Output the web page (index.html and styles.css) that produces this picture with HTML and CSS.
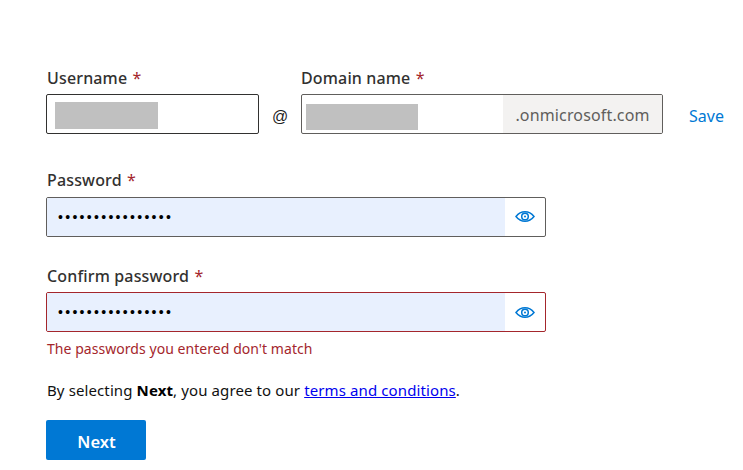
FILE: index.html
```html
<!DOCTYPE html>
<html lang="en">
<head>
<meta charset="utf-8">
<title>Create account</title>
<link rel="stylesheet" href="styles.css">
</head>
<body>
<form class="form">
  <div class="row-top">
    <div class="field user-field">
      <div class="label indent">Username <span class="req">*</span></div>
      <div class="box user-box"><div class="redact user-redact"></div></div>
    </div>
    <div class="at">@</div>
    <div class="field domain-field">
      <div class="label">Domain name <span class="req">*</span></div>
      <div class="box domain-box">
        <div class="domain-main"><div class="redact domain-redact"></div></div>
        <div class="suffix">.onmicrosoft.com</div>
      </div>
    </div>
    <a class="save">Save</a>
  </div>
  <div class="field pw-field">
    <div class="label indent">Password <span class="req">*</span></div>
    <div class="box pw-box">
      <div class="pw-value">••••••••••••••••</div>
      <div class="eye">
        <svg width="20" height="11" viewBox="0 0 20 11" fill="none" stroke="#0078d4" stroke-width="1.5"><path d="M1 5.500C3.500 2.300 6.500 .8 10 .8s6.500 1.500 9 4.700c-2.500 3.200-5.500 4.700-9 4.700S3.500 8.700 1 5.500Z"/><circle cx="10" cy="5.500" r="3.300"/><circle cx="10" cy="5.500" r="1" fill="#0078d4" stroke="none"/></svg>
      </div>
    </div>
  </div>
  <div class="field confirm-field">
    <div class="label indent">Confirm password <span class="req">*</span></div>
    <div class="box pw-box error-box">
      <div class="pw-value">••••••••••••••••</div>
      <div class="eye">
        <svg width="20" height="11" viewBox="0 0 20 11" fill="none" stroke="#0078d4" stroke-width="1.5"><path d="M1 5.500C3.500 2.300 6.500 .8 10 .8s6.500 1.500 9 4.700c-2.500 3.200-5.500 4.700-9 4.700S3.500 8.700 1 5.500Z"/><circle cx="10" cy="5.500" r="3.300"/><circle cx="10" cy="5.500" r="1" fill="#0078d4" stroke="none"/></svg>
      </div>
    </div>
    <div class="error">The passwords you entered don't match</div>
  </div>
  <p class="terms">By selecting <b>Next</b>, you agree to our <a class="link" href="#">terms and conditions</a>.</p>
  <button class="next" type="button">Next</button>
</form>
</body>
</html>
```
FILE: styles.css
```css
* { box-sizing: border-box; }
html, body { margin: 0; background: #fff; }
body { font-family: "Noto Sans", "Open Sans", sans-serif; color: #323130; overflow: hidden; height: 470px; }
.form { padding: 66px 0 0 46px; }
.row-top { display: flex; align-items: flex-start; }
.label { font-size: 16px; font-weight: 500; line-height: 24px; height: 28px; color: #323130; letter-spacing: 0.15px; }
.indent { padding-left: 1px; }
.req { color: #a4262c; font-weight: 400; margin-left: 1px; }
.box { height: 40px; border: 1px solid #605e5c; border-radius: 2px; background: #fff; display: flex; overflow: hidden; }
.user-field { width: 213px; }
.user-box { border-color: #323130; padding: 7px 0 0 8px; }
.redact { background: #c0c0c0; }
.user-redact { width: 103px; height: 27px; }
.at { width: 42px; padding-top: 41px; text-align: center; font-size: 16px; line-height: 20px; color: #222; font-family: "Liberation Sans", sans-serif; }
.domain-field { width: 362px; }
.domain-main { flex: 1; padding: 9px 0 0 4px; }
.domain-redact { width: 112px; height: 26px; }
.suffix { width: 159px; background: #f3f2f1; color: #605e5c; font-size: 16px; letter-spacing: 0.15px; line-height: 40px; text-align: center; }
.save { margin: 38px 0 0 26px; font-size: 16px; line-height: 24px; color: #0078d4; }
.field { display: block; }
.pw-field { margin-top: 34px; }
.pw-field .label { height: 29px; }
.pw-field .eye { padding-bottom: 1px; }
.confirm-field { margin-top: 27px; }
.confirm-field .label { height: 28px; }
.pw-box { width: 500px; }
.pw-value { width: 458px; background: #e8f0fe; color: #000; padding-left: 11px; font-size: 14px; line-height: 38px; letter-spacing: 2.300px; font-family: "Liberation Sans", sans-serif; }
.eye { flex: 1; display: flex; align-items: center; justify-content: center; }
.error-box { border-color: #a4262c; }
.error { margin-top: 7px; padding-left: 1px; font-size: 14px; line-height: 20px; letter-spacing: 0.05px; color: #a4262c; }
.terms { margin: 21px 0 0; padding-left: 1px; font-size: 15px; line-height: 20px; letter-spacing: 0.11px; color: #111; }
.terms b { color: #000; font-weight: 700; }
.link { color: #0000ee; text-decoration: underline; }
.next { display: block; margin-top: 20px; width: 100px; height: 40px; padding: 2px 0 0 1px; background: #0078d4; color: #fff; border: 0; border-radius: 2px; font-family: inherit; font-size: 16.500px; font-weight: 600; }
```
